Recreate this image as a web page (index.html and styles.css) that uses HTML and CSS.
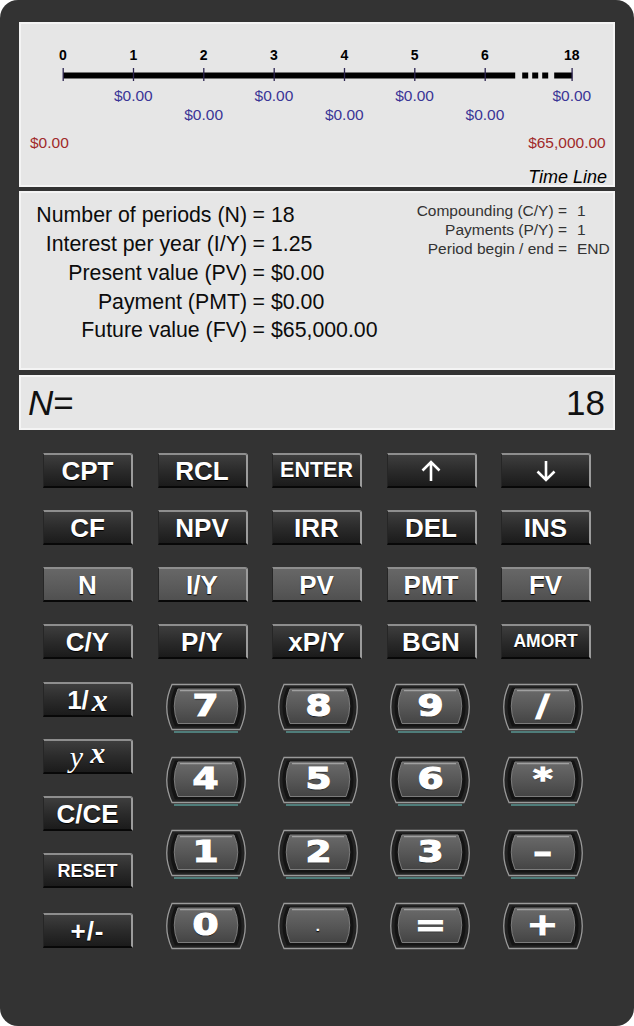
FILE: index.html
```html
<!DOCTYPE html>
<html lang="en">
<head>
<meta charset="utf-8">
<title>Financial Calculator</title>
<link rel="stylesheet" href="styles.css">
</head>
<body>
<div class="calc">
  <svg class="defs" width="0" height="0" aria-hidden="true">
    <defs>
      <linearGradient id="face" x1="0" y1="0" x2="0" y2="1">
        <stop offset="0" stop-color="#6a6a6a"/>
        <stop offset="0.55" stop-color="#565656"/>
        <stop offset="1" stop-color="#444444"/>
      </linearGradient>
      <symbol id="key" viewBox="0 0 86 50">
        <path d="M9 1.5 H77 Q87.5 24 77 46.5 H9 Q-1.5 24 9 1.5 Z" fill="#232323" stroke="#9a9a9a" stroke-width="1.3"/>
        <path d="M12 4.5 H74 Q83 24 74 43.5 H12 Q3 24 12 4.5 Z" fill="#141414"/>
        <path d="M15 6 H71 Q78.5 23 71 40.5 H15 Q7.5 23 15 6 Z" fill="url(#face)" stroke="#7c7c7c" stroke-width="1"/>
        <path d="M17 7.6 H69" stroke="#a0a0a0" stroke-width="1.2"/>
        <path d="M11 49 H75" stroke="#4f7d7a" stroke-width="2"/>
      </symbol>
      <symbol id="key0" viewBox="0 0 86 50">
        <path d="M9 1.5 H77 Q87.5 24 77 46.5 H9 Q-1.5 24 9 1.5 Z" fill="#232323" stroke="#9a9a9a" stroke-width="1.3"/>
        <path d="M12 4.5 H74 Q83 24 74 43.5 H12 Q3 24 12 4.5 Z" fill="#141414"/>
        <path d="M15 6 H71 Q78.5 23 71 40.5 H15 Q7.5 23 15 6 Z" fill="url(#face)" stroke="#7c7c7c" stroke-width="1"/>
        <path d="M17 7.6 H69" stroke="#a0a0a0" stroke-width="1.2"/>
      </symbol>
    </defs>
  </svg>

  <section class="panel timeline">
    <div class="tl-grid">
      <span class="tn c1">0</span>
      <span class="tn c2">1</span>
      <span class="tn c3">2</span>
      <span class="tn c4">3</span>
      <span class="tn c5">4</span>
      <span class="tn c6">5</span>
      <span class="tn c7">6</span>
      <span class="tn c9">18</span>
      <svg class="tl-bar" width="587" height="14" viewBox="0 0 587 14" aria-hidden="true">
        <rect x="35.2" y="5.5" width="452" height="6" fill="#000"/>
        <rect x="494.2" y="5.5" width="6" height="6" fill="#000"/>
        <rect x="504.2" y="5.5" width="6" height="6" fill="#000"/>
        <rect x="514.2" y="5.5" width="6" height="6" fill="#000"/>
        <rect x="526.2" y="5.5" width="18" height="6" fill="#000"/>
        <g stroke="#2c2450" stroke-width="1.3">
          <path d="M35.2 1 V14 M105.5 1 V14 M175.8 1 V14 M246.2 1 V14 M316.5 1 V14 M386.8 1 V14 M457.2 1 V14 M544.1 1 V14"/>
        </g>
      </svg>
      <span class="amt r1 c2">$0.00</span>
      <span class="amt r1 c4">$0.00</span>
      <span class="amt r1 c6">$0.00</span>
      <span class="amt r1 c9">$0.00</span>
      <span class="amt r2 c3">$0.00</span>
      <span class="amt r2 c5">$0.00</span>
      <span class="amt r2 c7">$0.00</span>
    </div>
    <div class="tl-totals">
      <span class="tot">$0.00</span>
      <span class="tot">$65,000.00</span>
    </div>
    <div class="tl-title">Time Line</div>
  </section>

  <section class="panel info">
    <div class="vals">
      <span class="lab">Number of periods (N)</span><span class="v">= 18</span>
      <span class="lab">Interest per year (I/Y)</span><span class="v">= 1.25</span>
      <span class="lab">Present value (PV)</span><span class="v">= $0.00</span>
      <span class="lab">Payment (PMT)</span><span class="v">= $0.00</span>
      <span class="lab">Future value (FV)</span><span class="v">= $65,000.00</span>
    </div>
    <div class="modes">
      <span class="ml">Compounding (C/Y) =</span><span>1</span>
      <span class="ml">Payments (P/Y) =</span><span>1</span>
      <span class="ml">Period begin / end =</span><span>END</span>
    </div>
  </section>

  <section class="panel display">
    <span class="dl"><i>N</i>=</span>
    <span class="dv">18</span>
  </section>

  <div class="keypad">
    <div class="fgrid">
      <button class="fk">CPT</button>
      <button class="fk">RCL</button>
      <button class="fk sm">ENTER</button>
      <button class="fk"><svg width="24" height="24" viewBox="0 0 24 24" aria-hidden="true"><path d="M12 22 V3 M3.5 11.5 L12 3 L20.5 11.5" fill="none" stroke="#fff" stroke-width="2.6"/></svg></button>
      <button class="fk"><svg width="24" height="24" viewBox="0 0 24 24" aria-hidden="true"><path d="M12 2 V21 M3.5 12.5 L12 21 L20.5 12.5" fill="none" stroke="#fff" stroke-width="2.6"/></svg></button>

      <button class="fk">CF</button>
      <button class="fk">NPV</button>
      <button class="fk">IRR</button>
      <button class="fk">DEL</button>
      <button class="fk">INS</button>

      <button class="fk alt">N</button>
      <button class="fk alt">I/Y</button>
      <button class="fk alt">PV</button>
      <button class="fk alt">PMT</button>
      <button class="fk alt">FV</button>

      <button class="fk">C/Y</button>
      <button class="fk">P/Y</button>
      <button class="fk">xP/Y</button>
      <button class="fk">BGN</button>
      <button class="fk xs">AMORT</button>
    </div>

    <div class="lower">
      <div class="lcol">
        <button class="fk"><span>1/</span><span class="ser">x</span></button>
        <button class="fk"><span class="sery">y</span><span class="ser sup">x</span></button>
        <button class="fk">C/CE</button>
        <button class="fk rs">RESET</button>
        <button class="fk last">+/-</button>
      </div>
      <div class="ngrid">
        <button class="num"><svg><use href="#key"/></svg><span>7</span></button>
        <button class="num"><svg><use href="#key"/></svg><span>8</span></button>
        <button class="num"><svg><use href="#key"/></svg><span>9</span></button>
        <button class="num"><svg><use href="#key"/></svg><span>/</span></button>

        <button class="num"><svg><use href="#key"/></svg><span>4</span></button>
        <button class="num"><svg><use href="#key"/></svg><span>5</span></button>
        <button class="num"><svg><use href="#key"/></svg><span>6</span></button>
        <button class="num"><svg><use href="#key"/></svg><span>*</span></button>

        <button class="num"><svg><use href="#key"/></svg><span>1</span></button>
        <button class="num"><svg><use href="#key"/></svg><span>2</span></button>
        <button class="num"><svg><use href="#key"/></svg><span>3</span></button>
        <button class="num"><svg><use href="#key"/></svg><span>&#8211;</span></button>

        <button class="num"><svg><use href="#key0"/></svg><span>0</span></button>
        <button class="num"><svg><use href="#key0"/></svg><span class="dot">.</span></button>
        <button class="num"><svg><use href="#key0"/></svg><span>=</span></button>
        <button class="num"><svg><use href="#key0"/></svg><span>+</span></button>
      </div>
    </div>
  </div>
</div>
</body>
</html>
```

FILE: styles.css
```css
html, body {
  margin: 0;
  padding: 0;
  background: #ffffff;
}

.calc {
  width: 634px;
  height: 1026px;
  box-sizing: border-box;
  background: #333333;
  border-radius: 18px;
  padding: 22px 19px 0 19px;
  font-family: "Liberation Sans", Arial, sans-serif;
  color: #111;
  overflow: hidden;
}

.defs {
  display: block;
  width: 0;
  height: 0;
  overflow: hidden;
}

.panel {
  box-sizing: border-box;
  background: #e6e6e6;
  border: 2px solid #f4f4f4;
}

/* ---------- Time line ---------- */
.timeline {
  height: 165px;
  padding-top: 23px;
}

.tl-grid {
  display: grid;
  grid-template-columns: repeat(7, 70.33px) 16.6px 70.33px;
  grid-template-rows: 16px 18px 23.5px 19px;
  padding-left: 6.8px;
}

.tn {
  grid-row: 1;
  text-align: center;
  font-weight: 700;
  font-size: 14px;
  line-height: 16px;
  color: #000;
}

.tl-bar {
  grid-row: 2;
  grid-column: 1 / -1;
  align-self: end;
  display: block;
}

.amt {
  text-align: center;
  font-size: 15.5px;
  line-height: 19px;
  color: #3a3596;
  white-space: nowrap;
}
.amt.r1 { grid-row: 3; align-self: end; }
.amt.r2 { grid-row: 4; }

.c1 { grid-column: 1; }
.c2 { grid-column: 2; }
.c3 { grid-column: 3; }
.c4 { grid-column: 4; }
.c5 { grid-column: 5; }
.c6 { grid-column: 6; }
.c7 { grid-column: 7; }
.c9 { grid-column: 9; }

.tl-totals {
  display: flex;
  justify-content: space-between;
  margin-top: 9.7px;
  padding: 0 7.3px 0 9px;
  font-size: 15.5px;
  line-height: 19px;
  color: #a02a2a;
}

.tl-title {
  margin-top: 15.8px;
  padding-right: 6px;
  text-align: right;
  font-style: italic;
  font-size: 18px;
  line-height: 18px;
  color: #000;
}

/* ---------- Info ---------- */
.info {
  margin-top: 4px;
  height: 179px;
  display: flex;
  justify-content: space-between;
  align-items: flex-start;
}

.vals {
  display: grid;
  grid-template-columns: 226px auto;
  column-gap: 5.6px;
  padding-top: 8.3px;
  font-size: 21.3px;
  line-height: 28.8px;
  color: #0c0c0c;
}
.vals .lab { text-align: right; white-space: nowrap; }
.vals .v { white-space: nowrap; }

.modes {
  display: grid;
  grid-template-columns: auto auto;
  column-gap: 10px;
  padding-top: 8.2px;
  padding-right: 3.3px;
  font-size: 15.5px;
  line-height: 19px;
  color: #333;
}
.modes .ml { text-align: right; white-space: nowrap; }

/* ---------- Display ---------- */
.display {
  margin-top: 5px;
  height: 55px;
  display: flex;
  justify-content: space-between;
  align-items: center;
  padding: 0 8px 0 7px;
  font-size: 35px;
  color: #111;
}
.display i { font-style: italic; }

/* ---------- Keypad ---------- */
.keypad {
  margin-top: 23px;
  padding-left: 24px;
}

.fgrid {
  display: grid;
  grid-template-columns: repeat(5, 90px);
  grid-auto-rows: 35px;
  column-gap: 24.5px;
  row-gap: 22px;
}

.fk {
  box-sizing: border-box;
  width: 90px;
  height: 35px;
  margin: 0;
  padding: 0;
  display: flex;
  align-items: center;
  justify-content: center;
  background: linear-gradient(#3e3e3e, #2b2b2b 50%, #1b1b1b);
  border-top: 2px solid #8e8e8e;
  border-right: 2px solid #9c9c9c;
  border-bottom: 2px solid #080808;
  border-left: 1px solid #262626;
  border-radius: 0 3px 0 0;
  color: #fff;
  font-family: "Liberation Sans", Arial, sans-serif;
  font-weight: 700;
  font-size: 26px;
  line-height: 1;
  text-shadow: 0 1px 1px #000;
}
.fk.alt {
  background: linear-gradient(#676767, #5a5a5a 60%, #505050);
}
.fk.sm { font-size: 21.5px; }
.fk.xs { font-size: 17.5px; }
.fk.rs { font-size: 18px; }
.fk.last { margin-top: 3px; letter-spacing: 1px; }

.fk .ser {
  font-family: "Liberation Serif", "Times New Roman", serif;
  font-style: italic;
  font-weight: 700;
  font-size: 32px;
  margin-left: 3px;
}
.fk .sery {
  font-family: "Liberation Serif", "Times New Roman", serif;
  font-style: italic;
  font-weight: 400;
  font-size: 30px;
  margin-right: 7px;
}
.fk .sup {
  font-size: 30px;
  margin-left: 0;
  margin-bottom: 8px;
}

.lower {
  display: flex;
  margin-top: 23px;
}

.lcol {
  display: flex;
  flex-direction: column;
  gap: 22px;
  width: 90px;
}

.ngrid {
  display: grid;
  grid-template-columns: repeat(4, 86px);
  grid-auto-rows: 50px;
  column-gap: 26.4px;
  row-gap: 23px;
  margin-left: 29.7px;
  margin-top: 1px;
}

.num {
  width: 86px;
  height: 50px;
  margin: 0;
  padding: 0;
  border: 0;
  background: none;
  display: grid;
}
.num svg {
  grid-area: 1 / 1;
  width: 86px;
  height: 50px;
  display: block;
}
.num span {
  grid-area: 1 / 1;
  align-self: center;
  justify-self: center;
  margin-bottom: 4px;
  font-family: "DejaVu Sans", "Liberation Sans", sans-serif;
  font-weight: 700;
  font-size: 30px;
  line-height: 1;
  color: #fff;
  -webkit-text-stroke: 1.2px #fff;
  transform: scaleX(1.25);
  text-shadow: 0 1px 1px #000;
}
.num span.dot {
  font-size: 18px;
  -webkit-text-stroke: 0;
  font-weight: 400;
}
```
